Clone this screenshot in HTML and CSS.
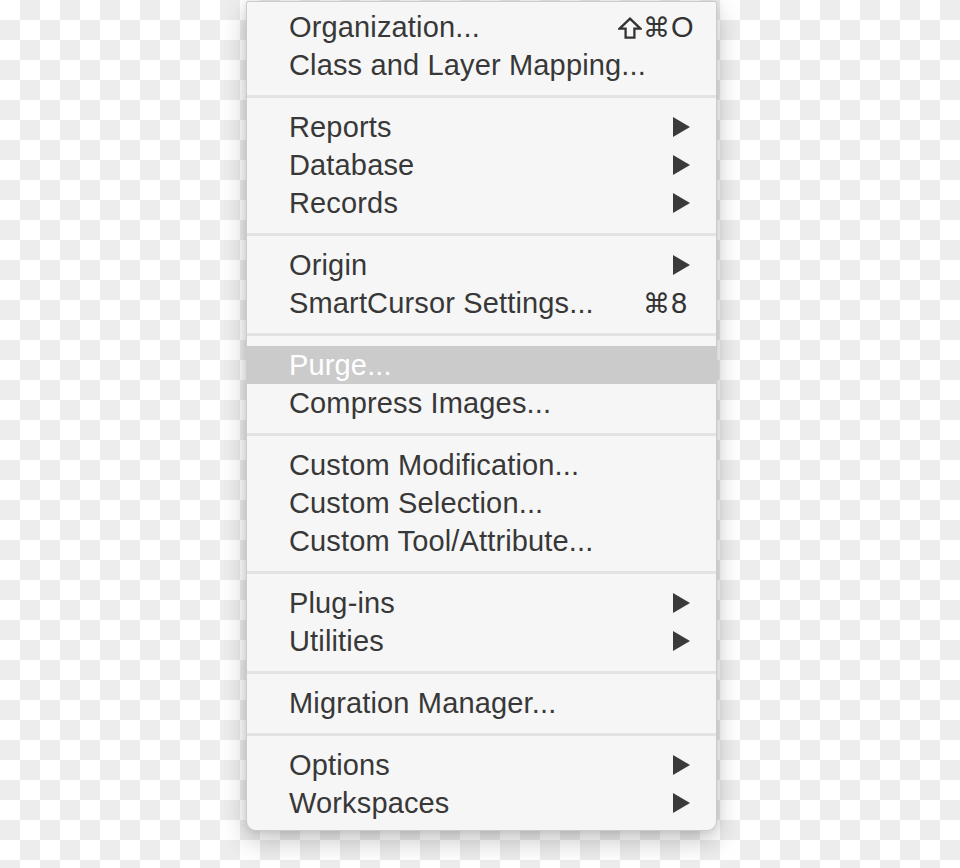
FILE: index.html
```html
<!DOCTYPE html>
<html>
<head>
<meta charset="utf-8">
<link rel="stylesheet" href="styles.css">
</head>
<body>
<div class="menu">
  <div class="item"><span class="label">Organization...</span><span class="shortcut"><svg class="shift" width="24" height="22" viewBox="0 0 24 22"><path d="M12 1.6 L22.4 11.6 L16.4 11.6 L16.4 20.6 L7.6 20.6 L7.6 11.6 L1.6 11.6 Z" fill="none" stroke="#333" stroke-width="2.3" stroke-linejoin="miter"/></svg><span class="mods">⌘</span><span class="key">O</span></span></div>
  <div class="item"><span class="label">Class and Layer Mapping...</span></div>
  <div class="sep"></div>
  <div class="item"><span class="label">Reports</span><span class="arrow"></span></div>
  <div class="item"><span class="label">Database</span><span class="arrow"></span></div>
  <div class="item"><span class="label">Records</span><span class="arrow"></span></div>
  <div class="sep"></div>
  <div class="item"><span class="label">Origin</span><span class="arrow"></span></div>
  <div class="item"><span class="label">SmartCursor Settings...</span><span class="shortcut"><span class="mods">⌘</span><span class="key">8</span></span></div>
  <div class="sep"></div>
  <div class="item active"><span class="label">Purge...</span></div>
  <div class="item"><span class="label">Compress Images...</span></div>
  <div class="sep"></div>
  <div class="item"><span class="label">Custom Modification...</span></div>
  <div class="item"><span class="label">Custom Selection...</span></div>
  <div class="item"><span class="label">Custom Tool/Attribute...</span></div>
  <div class="sep"></div>
  <div class="item"><span class="label">Plug-ins</span><span class="arrow"></span></div>
  <div class="item"><span class="label">Utilities</span><span class="arrow"></span></div>
  <div class="sep"></div>
  <div class="item"><span class="label">Migration Manager...</span></div>
  <div class="sep"></div>
  <div class="item"><span class="label">Options</span><span class="arrow"></span></div>
  <div class="item"><span class="label">Workspaces</span><span class="arrow"></span></div>
</div>
</body>
</html>
```

FILE: styles.css
```css
html, body {
  margin: 0;
  padding: 0;
}
body {
  width: 960px;
  height: 868px;
  overflow: hidden;
  background-color: #fff;
  background-image: conic-gradient(#ededed 25%, #fff 0 50%, #ededed 0 75%, #fff 0);
  background-size: 40px 40px;
  font-family: "Liberation Sans", Arial, sans-serif;
}
.menu {
  margin: 1px 0 0 246px;
  width: 469px;
  background: #f6f6f6;
  border: 1px solid #cbcbcb;
  border-radius: 2px 2px 10px 10px;
  padding: 6px 0 8px;
  box-shadow: 0 10px 26px rgba(0, 0, 0, 0.22), 0 0 8px rgba(0, 0, 0, 0.10);
}
.item {
  height: 38px;
  display: flex;
  align-items: center;
  padding: 0 26px 0 42px;
  font-size: 29px;
  letter-spacing: 0.15px;
  color: #383838;
  white-space: nowrap;
}
.item .label {
  flex: 1;
  padding-top: 1px;
}
.item.active {
  background: #cbcbcb;
  color: #fff;
}
.shortcut {
  display: flex;
  align-items: center;
  margin-right: -5px;
  font-family: "DejaVu Sans", "Liberation Sans", sans-serif;
  font-size: 27px;
  color: #333;
  letter-spacing: 0;
}
.shift {
  margin-right: 1px;
  margin-top: 1px;
}
.mods {
  text-align: right;
}
.key {
  width: 24px;
  margin-left: 1px;
  font-family: "Liberation Sans", Arial, sans-serif;
  font-size: 29px;
}
.arrow {
  width: 0;
  height: 0;
  border-top: 10px solid transparent;
  border-bottom: 10px solid transparent;
  border-left: 17px solid #3a3a3a;
}
.sep {
  height: 3px;
  background: #e3e3e3;
  margin: 11px 0 10px;
}
```
